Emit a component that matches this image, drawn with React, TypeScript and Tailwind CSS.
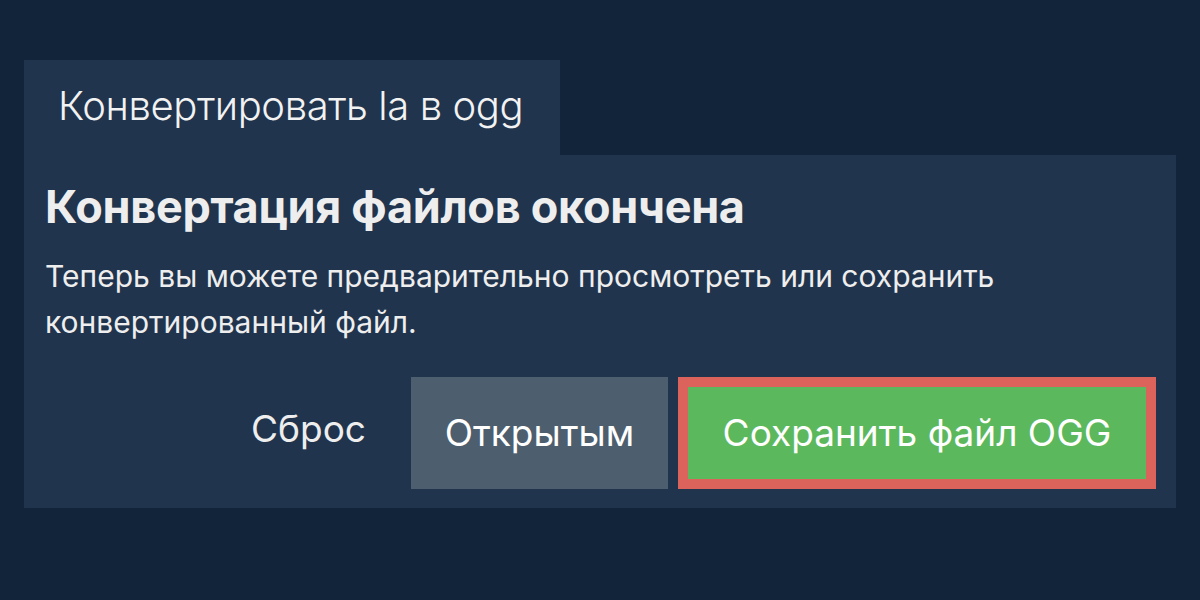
import React from "react";

const font = { fontFamily: "Inter, 'Noto Sans', sans-serif" };

const App = () => {
  return (
    <div className="min-h-[600px] w-[1200px] bg-[#12243a] px-6 pt-[60px]" style={font}>
      <div className="flex h-[95px] w-[536px] items-center bg-[#20344d] pl-[34px] pb-[4px]">
        <span className="text-[40px] font-light leading-none tracking-[-0.4px] text-[#f2f2f2]">
          Конвертировать la в ogg
        </span>
      </div>

      <div className="flex h-[353px] w-[1152px] flex-col bg-[#20344d] pl-[21px] pr-5 pt-[25px]">
        <h1 className="text-[45px] font-bold leading-[53px] tracking-[-0.3px] text-[#eeeeee]">
          Конвертация файлов окончена
        </h1>
        <p className="mt-[20px] text-[30px] leading-[46px] text-[#eeeeee]">
          Теперь вы можете предварительно просмотреть или сохранить
          <br />
          конвертированный файл.
        </p>

        <div className="mt-auto mb-[19px] flex items-start justify-end">
          <button className="mr-[45px] mt-[33px] text-[37px] leading-none text-[#eeeeee]">Сброс</button>
          <button className="flex h-[112px] w-[257px] items-center justify-center bg-[#4d5e6e] text-[37px] text-white">
            Открытым
          </button>
          <div className="ml-[10px] flex h-[112px] w-[478px] border-[10px] border-[#dc625c]">
            <button className="flex flex-1 items-center justify-center bg-[#5cb85c] text-[37px] text-white">
              Сохранить файл OGG
            </button>
          </div>
        </div>
      </div>
    </div>
  );
};

export default App;
